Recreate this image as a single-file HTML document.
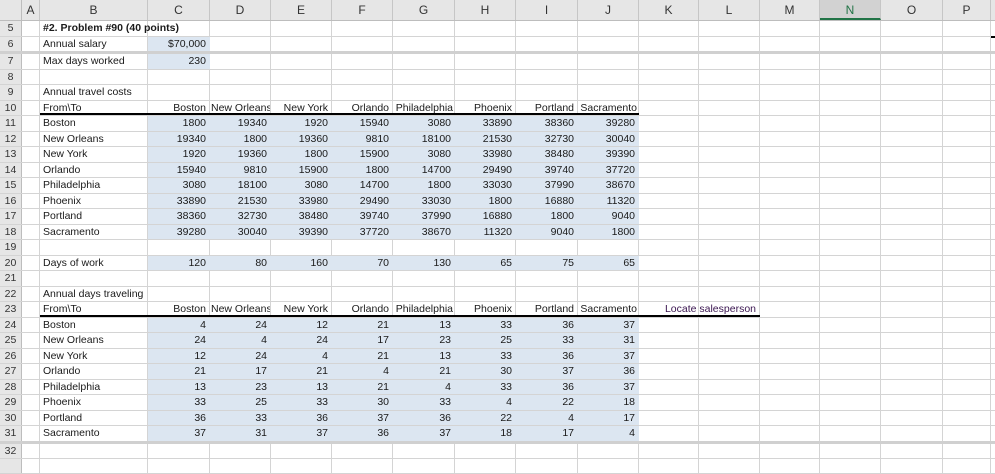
<!DOCTYPE html>
<html><head><meta charset="utf-8"><style>
*{box-sizing:border-box;margin:0;padding:0}
body{width:995px;height:460px;overflow:hidden;background:#fff;font-family:"Liberation Sans",sans-serif;font-size:10.5px;color:#1a1a1a}
.r{display:flex;height:15px;border-bottom:1px solid #d4d4d4;white-space:nowrap}
.r.t{height:16px}
.r>div{border-right:1px solid #d4d4d4;overflow:hidden;line-height:14px;padding:0 3px;flex:none}
.r>div:nth-child(1){width:22px;background:#e6e6e6;border-right:1px solid #bdbdbd;text-align:center;color:#333;padding:0}
.r>div:nth-child(2){width:18px}
.r>div:nth-child(3){width:108px}
.r>div:nth-child(4){width:62px}
.r>div:nth-child(5),.r>div:nth-child(6),.r>div:nth-child(7),.r>div:nth-child(9),.r>div:nth-child(11),.r>div:nth-child(13){width:61px}
.r>div:nth-child(8),.r>div:nth-child(10){width:62px}
.r>div:nth-child(12){width:60px}
.r>div:nth-child(14){width:60px}
.r>div:nth-child(15){width:61px}
.r>div:nth-child(16){width:62px}
.r>div:nth-child(17){width:48px}
.r>div:nth-child(18){width:10px}
.b{background:#dce6f1;text-align:right;border-right-color:#dce6f1!important}
.n{text-align:right}
.o{overflow:visible!important}
.h{height:21px;background:#e6e6e6;border-bottom:1px solid #bdbdbd}
.h>div{text-align:center;line-height:20px;font-size:12px;color:#333;border-right:1px solid #c6c6c6}
.sel{background:#d2d2d2;color:#217346!important;border-bottom:2px solid #217346}
.thk{border-bottom:2px solid #d0d0d0}
.ul{position:absolute;height:2px;background:#000}
.bl{border-bottom-color:#dce6f1}
</style></head><body>
<div class="r h"><div></div><div>A</div><div>B</div><div>C</div><div>D</div><div>E</div><div>F</div><div>G</div><div>H</div><div>I</div><div>J</div><div>K</div><div>L</div><div>M</div><div class="sel">N</div><div>O</div><div>P</div><div></div></div>
<div class="r t"><div>5</div><div></div><div class="o"><b>#2. Problem #90 (40 points)</b></div><div></div><div></div><div></div><div></div><div></div><div></div><div></div><div></div><div></div><div></div><div></div><div></div><div></div><div></div><div></div></div>
<div class="r" style="height:17px;border-bottom:3px solid #d0d0d0"><div>6</div><div></div><div>Annual salary</div><div class="b">$70,000</div><div></div><div></div><div></div><div></div><div></div><div></div><div></div><div></div><div></div><div></div><div></div><div></div><div></div><div></div></div>
<div class="r t"><div>7</div><div></div><div>Max days worked</div><div class="b">230</div><div></div><div></div><div></div><div></div><div></div><div></div><div></div><div></div><div></div><div></div><div></div><div></div><div></div><div></div></div>
<div class="r"><div>8</div><div></div><div></div><div></div><div></div><div></div><div></div><div></div><div></div><div></div><div></div><div></div><div></div><div></div><div></div><div></div><div></div><div></div></div>
<div class="r t"><div>9</div><div></div><div>Annual travel costs</div><div></div><div></div><div></div><div></div><div></div><div></div><div></div><div></div><div></div><div></div><div></div><div></div><div></div><div></div><div></div></div>
<div class="r"><div>10</div><div></div><div>From\To</div><div class="n">Boston</div><div class="n" style="padding:0 1px">New Orleans</div><div class="n">New York</div><div class="n">Orlando</div><div class="n" style="padding:0 1px">Philadelphia</div><div class="n">Phoenix</div><div class="n">Portland</div><div class="n" style="padding:0 1px">Sacramento</div><div></div><div></div><div></div><div></div><div></div><div></div><div></div></div>
<div class="r t"><div>11</div><div></div><div>Boston</div><div class="b">1800</div><div class="b">19340</div><div class="b">1920</div><div class="b">15940</div><div class="b">3080</div><div class="b">33890</div><div class="b">38360</div><div class="b">39280</div><div></div><div></div><div></div><div></div><div></div><div></div><div></div></div>
<div class="r"><div>12</div><div></div><div>New Orleans</div><div class="b">19340</div><div class="b">1800</div><div class="b">19360</div><div class="b">9810</div><div class="b">18100</div><div class="b">21530</div><div class="b">32730</div><div class="b">30040</div><div></div><div></div><div></div><div></div><div></div><div></div><div></div></div>
<div class="r t"><div>13</div><div></div><div>New York</div><div class="b">1920</div><div class="b">19360</div><div class="b">1800</div><div class="b">15900</div><div class="b">3080</div><div class="b">33980</div><div class="b">38480</div><div class="b">39390</div><div></div><div></div><div></div><div></div><div></div><div></div><div></div></div>
<div class="r"><div>14</div><div></div><div>Orlando</div><div class="b">15940</div><div class="b">9810</div><div class="b">15900</div><div class="b">1800</div><div class="b">14700</div><div class="b">29490</div><div class="b">39740</div><div class="b">37720</div><div></div><div></div><div></div><div></div><div></div><div></div><div></div></div>
<div class="r t"><div>15</div><div></div><div>Philadelphia</div><div class="b">3080</div><div class="b">18100</div><div class="b">3080</div><div class="b">14700</div><div class="b">1800</div><div class="b">33030</div><div class="b">37990</div><div class="b">38670</div><div></div><div></div><div></div><div></div><div></div><div></div><div></div></div>
<div class="r"><div>16</div><div></div><div>Phoenix</div><div class="b">33890</div><div class="b">21530</div><div class="b">33980</div><div class="b">29490</div><div class="b">33030</div><div class="b">1800</div><div class="b">16880</div><div class="b">11320</div><div></div><div></div><div></div><div></div><div></div><div></div><div></div></div>
<div class="r t"><div>17</div><div></div><div>Portland</div><div class="b">38360</div><div class="b">32730</div><div class="b">38480</div><div class="b">39740</div><div class="b">37990</div><div class="b">16880</div><div class="b">1800</div><div class="b">9040</div><div></div><div></div><div></div><div></div><div></div><div></div><div></div></div>
<div class="r"><div>18</div><div></div><div>Sacramento</div><div class="b">39280</div><div class="b">30040</div><div class="b">39390</div><div class="b">37720</div><div class="b">38670</div><div class="b">11320</div><div class="b">9040</div><div class="b">1800</div><div></div><div></div><div></div><div></div><div></div><div></div><div></div></div>
<div class="r t"><div>19</div><div></div><div></div><div></div><div></div><div></div><div></div><div></div><div></div><div></div><div></div><div></div><div></div><div></div><div></div><div></div><div></div><div></div></div>
<div class="r"><div>20</div><div></div><div>Days of work</div><div class="b">120</div><div class="b">80</div><div class="b">160</div><div class="b">70</div><div class="b">130</div><div class="b">65</div><div class="b">75</div><div class="b">65</div><div></div><div></div><div></div><div></div><div></div><div></div><div></div></div>
<div class="r t"><div>21</div><div></div><div></div><div></div><div></div><div></div><div></div><div></div><div></div><div></div><div></div><div></div><div></div><div></div><div></div><div></div><div></div><div></div></div>
<div class="r"><div>22</div><div></div><div>Annual days traveling</div><div></div><div></div><div></div><div></div><div></div><div></div><div></div><div></div><div></div><div></div><div></div><div></div><div></div><div></div><div></div></div>
<div class="r t"><div>23</div><div></div><div>From\To</div><div class="n">Boston</div><div class="n" style="padding:0 1px">New Orleans</div><div class="n">New York</div><div class="n">Orlando</div><div class="n" style="padding:0 1px">Philadelphia</div><div class="n">Phoenix</div><div class="n">Portland</div><div class="n" style="padding:0 1px">Sacramento</div><div></div><div class="n o" style="color:#3a1550;direction:rtl">Locate salesperson</div><div></div><div></div><div></div><div></div><div></div></div>
<div class="r"><div>24</div><div></div><div>Boston</div><div class="b">4</div><div class="b">24</div><div class="b">12</div><div class="b">21</div><div class="b">13</div><div class="b">33</div><div class="b">36</div><div class="b">37</div><div></div><div></div><div></div><div></div><div></div><div></div><div></div></div>
<div class="r t"><div>25</div><div></div><div>New Orleans</div><div class="b">24</div><div class="b">4</div><div class="b">24</div><div class="b">17</div><div class="b">23</div><div class="b">25</div><div class="b">33</div><div class="b">31</div><div></div><div></div><div></div><div></div><div></div><div></div><div></div></div>
<div class="r"><div>26</div><div></div><div>New York</div><div class="b">12</div><div class="b">24</div><div class="b">4</div><div class="b">21</div><div class="b">13</div><div class="b">33</div><div class="b">36</div><div class="b">37</div><div></div><div></div><div></div><div></div><div></div><div></div><div></div></div>
<div class="r t"><div>27</div><div></div><div>Orlando</div><div class="b">21</div><div class="b">17</div><div class="b">21</div><div class="b">4</div><div class="b">21</div><div class="b">30</div><div class="b">37</div><div class="b">36</div><div></div><div></div><div></div><div></div><div></div><div></div><div></div></div>
<div class="r"><div>28</div><div></div><div>Philadelphia</div><div class="b">13</div><div class="b">23</div><div class="b">13</div><div class="b">21</div><div class="b">4</div><div class="b">33</div><div class="b">36</div><div class="b">37</div><div></div><div></div><div></div><div></div><div></div><div></div><div></div></div>
<div class="r t"><div>29</div><div></div><div>Phoenix</div><div class="b">33</div><div class="b">25</div><div class="b">33</div><div class="b">30</div><div class="b">33</div><div class="b">4</div><div class="b">22</div><div class="b">18</div><div></div><div></div><div></div><div></div><div></div><div></div><div></div></div>
<div class="r"><div>30</div><div></div><div>Portland</div><div class="b">36</div><div class="b">33</div><div class="b">36</div><div class="b">37</div><div class="b">36</div><div class="b">22</div><div class="b">4</div><div class="b">17</div><div></div><div></div><div></div><div></div><div></div><div></div><div></div></div>
<div class="r t" style="height:18px;border-bottom:3px solid #d0d0d0"><div>31</div><div></div><div>Sacramento</div><div class="b">37</div><div class="b">31</div><div class="b">37</div><div class="b">36</div><div class="b">37</div><div class="b">18</div><div class="b">17</div><div class="b">4</div><div></div><div></div><div></div><div></div><div></div><div></div><div></div></div>
<div class="r"><div>32</div><div></div><div></div><div></div><div></div><div></div><div></div><div></div><div></div><div></div><div></div><div></div><div></div><div></div><div></div><div></div><div></div><div></div></div>
<div class="r"><div></div><div></div><div></div><div></div><div></div><div></div><div></div><div></div><div></div><div></div><div></div><div></div><div></div><div></div><div></div><div></div><div></div><div></div></div>
<div class="ul" style="left:40px;top:113px;width:599px"></div>
<div class="ul" style="left:40px;top:315px;width:720px"></div>
<div class="ul" style="left:991px;top:36px;width:4px"></div>
</body></html>
